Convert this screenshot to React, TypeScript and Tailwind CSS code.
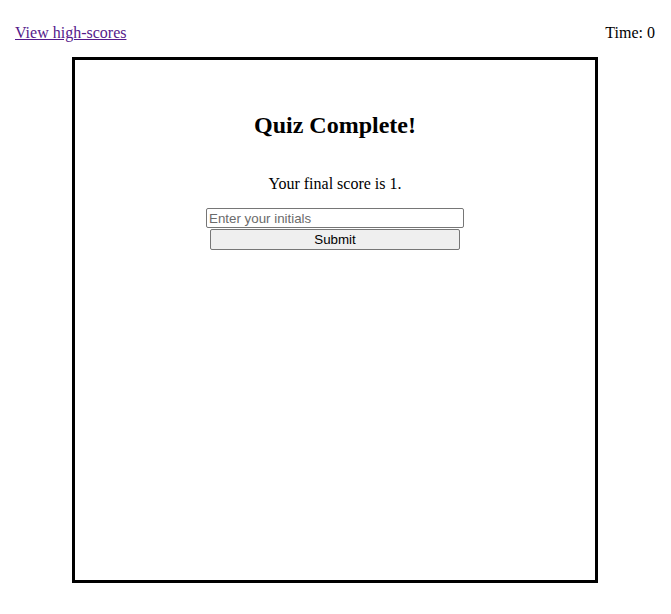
export default function App() {
  return (
    <div className="min-h-[614px] bg-white text-black" style={{ fontFamily: '"Liberation Serif", "Times New Roman", serif' }}>
      <div className="flex justify-between items-start pl-[15px] pr-[16px] pt-[24px] text-[16px] leading-[18px]">
        <a href="#" className="text-[#551a8b] underline">View high-scores</a>
        <span>Time: 0</span>
      </div>
      <div className="ml-[72px] mt-[15px] w-[526px] h-[526px] border-[3px] border-black p-[10px] flex flex-col items-center">
        <h2 className="mt-[41px] text-[24px] leading-[28px] font-bold">Quiz Complete!</h2>
        <p className="mt-[36px] text-[16px] leading-[18px]">Your final score is 1.</p>
        <input
          type="text"
          placeholder="Enter your initials"
          className="mt-[15px] w-[258px] h-[20px] border border-[#767676] rounded-[2px] px-[2px] text-[13.33px] leading-[16px] placeholder:text-[#6b6b6b] bg-white"
          style={{ fontFamily: '"Liberation Sans", Arial, sans-serif' }}
        />
        <button
          className="mt-[1px] w-[250px] h-[21px] border border-[#767676] rounded-[2px] bg-[#efefef] text-[13.33px] leading-[16px] text-black"
          style={{ fontFamily: '"Liberation Sans", Arial, sans-serif' }}
        >
          Submit
        </button>
      </div>
    </div>
  );
}
